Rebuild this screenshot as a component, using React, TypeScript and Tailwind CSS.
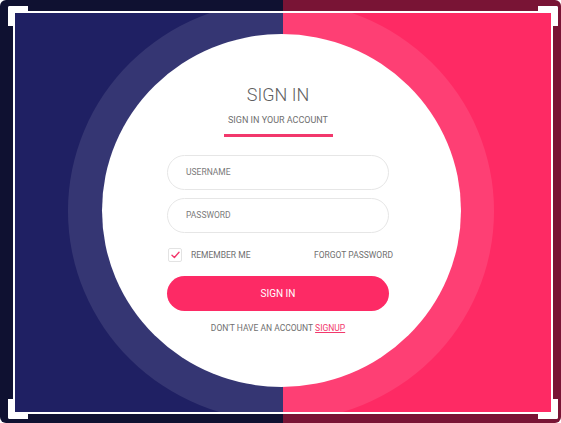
const Bracket = ({ pos }: { pos: string }) => (
  <div className={`absolute w-[20px] h-[20px] border-white ${pos}`} />
);

const App = () => {
  return (
    <div className="w-[561px] h-[423px] bg-white font-['Roboto',sans-serif]">
      <div className="relative w-[561px] h-[423px] rounded-[6px] overflow-hidden bg-[linear-gradient(90deg,#0f1131_283px,#791435_283px)] pt-[11px] pl-[13px]">
        <Bracket pos="left-[8px] top-[6px] border-l-[5px] border-t-[5px] rounded-tl-[2px]" />
        <Bracket pos="right-[3px] top-[6px] border-r-[5px] border-t-[5px] rounded-tr-[2px]" />
        <Bracket pos="left-[8px] bottom-[4px] border-l-[5px] border-b-[5px] rounded-bl-[2px]" />
        <Bracket pos="right-[3px] bottom-[4px] border-r-[5px] border-b-[5px] rounded-br-[2px]" />

        <div className="relative w-[540px] h-[403px] border-2 border-white overflow-hidden bg-[linear-gradient(90deg,#1f2063_50%,#fe2a64_50%)] flex items-center justify-center pr-[4px] pb-[4px]">
          <div className="w-[426px] h-[420px] shrink-0 rounded-[50%] bg-white/10 flex items-center justify-center">
            <div className="w-[359px] h-[353px] shrink-0 rounded-[50%] bg-white flex flex-col items-center pt-[50px] pr-[6px]">
              <div className="w-[222px] flex flex-col items-center">
                <h1 className="text-[18px] leading-[22px] font-light text-[#5f5f5f]">SIGN IN</h1>
                <p className="mt-[8px] text-[9px] leading-[12px] text-[#707070]">SIGN IN YOUR ACCOUNT</p>
                <div className="mt-[8px] w-[109px] h-[3px] bg-[#f2386c]" />

                <div className="mt-[18px] w-[222px] h-[35px] rounded-full border border-[#e6e6e6] flex items-center pl-[18px] text-[8.5px] text-[#7a7a7a]">
                  USERNAME
                </div>
                <div className="mt-[8px] w-[222px] h-[35px] rounded-full border border-[#e6e6e6] flex items-center pl-[18px] text-[8.5px] text-[#7a7a7a]">
                  PASSWORD
                </div>

                <div className="mt-[15px] self-start w-[226px] pl-[1px] flex items-center justify-between text-[8.5px] leading-[12px] text-[#6f6f6f]">
                  <div className="flex items-center gap-[9px]">
                    <span className="w-[14px] h-[14px] rounded-[2px] border border-[#e3e3e3] flex items-center justify-center">
                      <svg width="9" height="8" viewBox="0 0 9 8" fill="none">
                        <path d="M1 4.2 L3.4 6.5 L8 1.2" stroke="#f2386c" strokeWidth="1.4" strokeLinecap="round" strokeLinejoin="round" />
                      </svg>
                    </span>
                    <span>REMEMBER ME</span>
                  </div>
                  <span>FORGOT PASSWORD</span>
                </div>

                <button className="mt-[14px] w-[222px] h-[35px] rounded-full bg-[#fd2a65] text-white text-[10px]">
                  SIGN IN
                </button>

                <p className="mt-[11px] text-[8.5px] leading-[12px] text-[#6f6f6f]">
                  DON'T HAVE AN ACCOUNT <span className="text-[#f2386c] underline">SIGNUP</span>
                </p>
              </div>
            </div>
          </div>
        </div>
      </div>
    </div>
  );
};

export default App;
